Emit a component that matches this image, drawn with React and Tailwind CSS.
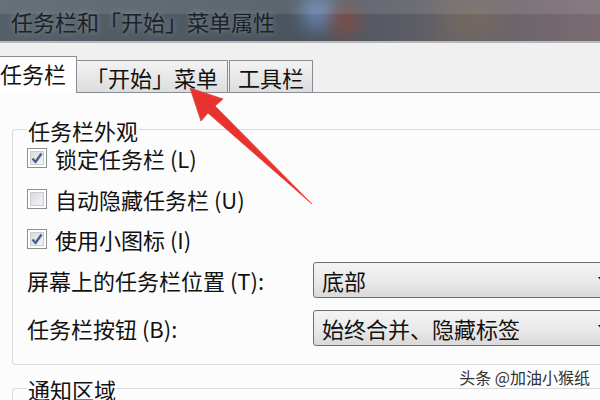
import React from 'react';

const font = { fontFamily: '"Noto Sans CJK SC", "Noto Sans", sans-serif' };

function CheckBox({ checked }) {
  return (
    <div className="w-[20px] h-[20px] border border-[#8e8f8f] bg-white p-[2px] shrink-0">
      <div className="w-full h-full border border-[#c8cbd0] bg-gradient-to-br from-[#d8dade] to-[#f6f6f6] flex items-center justify-center">
        {checked && (
          <svg width="12" height="12" viewBox="0 0 12 12">
            <path d="M1.5 6.5 L4.5 10 L10.5 1.5" fill="none" stroke="#4b5f8c" strokeWidth="2.4" strokeLinejoin="round" />
          </svg>
        )}
      </div>
    </div>
  );
}

function Select({ value }) {
  return (
    <div className="w-[300px] h-[36px] rounded-[3px] border border-[#707070] bg-gradient-to-b from-[#f3f3f3] via-[#ebebeb] to-[#d9d9d9] flex items-center pl-[8px] pr-[5px] shrink-0">
      <span className="flex-1 text-[22px] leading-none text-[#111]">{value}</span>
      <svg width="9" height="6" viewBox="0 0 9 6" className="shrink-0">
        <path d="M0 0 H9 L4.5 5.5 Z" fill="#111" />
      </svg>
    </div>
  );
}

export default function App() {
  return (
    <div className="w-[600px] h-[400px] overflow-hidden relative bg-[#f0f0f0]" style={font}>
      {/* title bar */}
      <div className="h-[41px] relative overflow-hidden bg-gradient-to-r from-[#55606a] via-[#4a545e] to-[#7b6b72] flex items-center pl-[11px]">
        <div className="absolute left-[300px] top-[-6px] w-[36px] h-[36px] rounded-full bg-[#6d8fc2] blur-[8px] opacity-70" />
        <div className="absolute left-[330px] top-[6px] w-[30px] h-[30px] rounded-full bg-[#8a4a3c] blur-[8px] opacity-70" />
        <div className="absolute left-[440px] top-[0px] w-[60px] h-[40px] rounded-full bg-[#80705a] blur-[14px] opacity-60" />
        <div className="absolute inset-x-0 top-0 h-[14px] bg-white/10" />
        <span className="relative text-[22px] leading-none text-[#1b2228] [text-shadow:0_0_6px_rgba(255,255,255,0.35)]">
          任务栏和「开始」菜单属性
        </span>
      </div>
      <div className="h-[2px] bg-[#b9b9b9]" />

      {/* tabs */}
      <div className="h-[49px] flex items-end">
        <div className="w-[78px] h-[37px] -ml-[1px] bg-white border-r border-t border-[#898c95] relative z-10 -mb-[1px] flex items-start pt-[5px] text-[22px] leading-none text-[#111]">
          <span className="pl-[1px]">任务栏</span>
        </div>
        <div className="w-[151px] h-[32px] border border-l-0 border-b-0 border-[#898c95] bg-gradient-to-b from-[#f3f3f3] to-[#dddddd] flex items-center justify-center text-[22px] leading-none text-[#111]">
          「开始」菜单
        </div>
        <div className="w-[84px] h-[32px] ml-[1px] border border-b-0 border-[#898c95] bg-gradient-to-b from-[#f3f3f3] to-[#dddddd] flex items-center justify-center text-[22px] leading-none text-[#111]">
          工具栏
        </div>
      </div>

      {/* panel */}
      <div className="border-t border-[#898c95] bg-[#fcfcfc] h-[310px] pt-[36px] pl-[12px]">
        <div className="w-[640px] h-[236px] border border-[#d5dbe0] rounded-[3px] pl-[14px]">
          <div className="-mt-[12px] h-[24px] flex items-center">
            <span className="bg-[#fcfcfc] px-[1px] text-[22px] leading-none text-[#111]">任务栏外观</span>
          </div>
          <div className="flex flex-col text-[22px] leading-none text-[#111]">
            <div className="flex items-center gap-[8px] h-[20px] mt-[6px]">
              <CheckBox checked />
              <span>锁定任务栏 (L)</span>
            </div>
            <div className="flex items-center gap-[8px] h-[20px] mt-[21px]">
              <CheckBox />
              <span>自动隐藏任务栏 (U)</span>
            </div>
            <div className="flex items-center gap-[8px] h-[20px] mt-[20px]">
              <CheckBox checked />
              <span>使用小图标 (I)</span>
            </div>
            <div className="flex items-center h-[36px] mt-[13px]">
              <span className="w-[286px] shrink-0">屏幕上的任务栏位置 (T):</span>
              <Select value="底部" />
            </div>
            <div className="flex items-center h-[36px] mt-[12px]">
              <span className="w-[286px] shrink-0">任务栏按钮 (B):</span>
              <Select value="始终合并、隐藏标签" />
            </div>
          </div>
        </div>
        <div className="flex justify-end pr-[10px] h-[23px] items-center">
          <span className="text-[16px] leading-none text-[#333]">头条 @加油小猴纸</span>
        </div>
        <div className="w-[640px] h-[40px] border border-[#d5dbe0] rounded-[3px] pl-[14px]">
          <div className="-mt-[12px] h-[24px] flex items-center">
            <span className="bg-[#fcfcfc] px-[1px] text-[22px] leading-none text-[#111]">通知区域</span>
          </div>
        </div>
      </div>

      {/* red arrow annotation */}
      <svg className="absolute left-0 top-0 pointer-events-none" width="600" height="400" viewBox="0 0 600 400">
        <polygon
          points="190,88 223,99 215,106 312,204 208,113 201,121"
          fill="#e8322f"
          stroke="#ee4a45"
          strokeWidth="1"
          strokeLinejoin="round"
        />
      </svg>
    </div>
  );
}
